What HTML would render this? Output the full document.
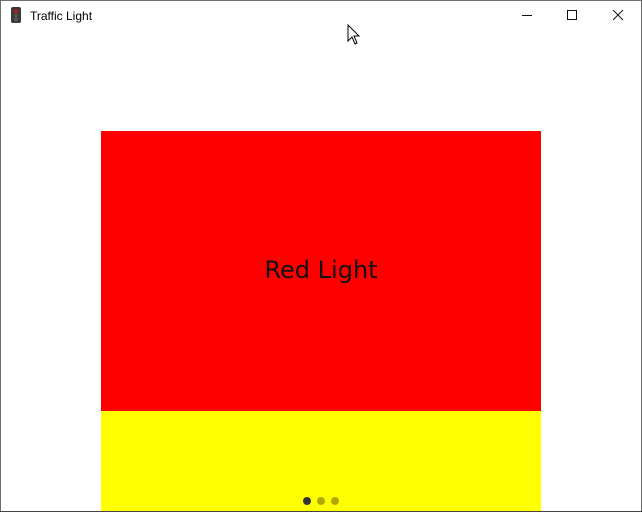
<!DOCTYPE html>
<html><head><style>
html,body{margin:0;padding:0;width:642px;height:512px;overflow:hidden;background:#fff;font-family:"Liberation Sans",sans-serif;}
.win{position:absolute;left:0;top:0;width:640px;height:510px;border:1px solid #6e6e6e;border-bottom:1px solid #333;}
.title{position:absolute;left:30px;top:9px;font-size:12px;color:#000;}
.red{position:absolute;left:101px;top:131px;width:440px;height:280px;background:#f00;}
.yel{position:absolute;left:101px;top:411px;width:440px;height:100px;background:#ff0;}
.lbl{position:absolute;left:0;width:440px;top:125px;text-align:center;font-size:24px;font-family:"DejaVu Sans","Liberation Sans",sans-serif;color:#111;}
.dot{position:absolute;top:497px;width:8px;height:8px;border-radius:50%;}
</style></head><body>
<div class="win"></div>
<svg style="position:absolute;left:11px;top:7px" width="10" height="16"><rect x="0" y="0" width="10" height="16" rx="2" fill="#3a3a3a"/><circle cx="5" cy="4" r="2.3" fill="#a02020"/><circle cx="5" cy="8.5" r="2" fill="#555"/><circle cx="5" cy="12.5" r="2" fill="#555"/></svg>
<div class="title">Traffic Light</div>
<svg style="position:absolute;left:520px;top:8px" width="110" height="16" stroke="#111" fill="none" stroke-width="1">
<line x1="2" y1="7.5" x2="12" y2="7.5"/>
<rect x="47.5" y="2.5" width="9" height="9"/>
<line x1="93" y1="2" x2="103" y2="12"/><line x1="103" y1="2" x2="93" y2="12"/>
</svg>
<svg style="position:absolute;left:347px;top:24px" width="14" height="22"><path d="M1 1 L1 17 L5 13 L8 20 L10 19 L7 12 L12 12 Z" fill="#fff" stroke="#000" stroke-width="1"/></svg>
<div class="red"><div class="lbl">Red Light</div></div>
<div class="yel"></div>
<div class="dot" style="left:303px;background:#333;"></div>
<div class="dot" style="left:317px;background:#b0a800;"></div>
<div class="dot" style="left:331px;background:#b0a800;"></div>
<div style="position:absolute;left:0;top:511px;width:642px;height:1px;background:#444"></div>
</body></html>
